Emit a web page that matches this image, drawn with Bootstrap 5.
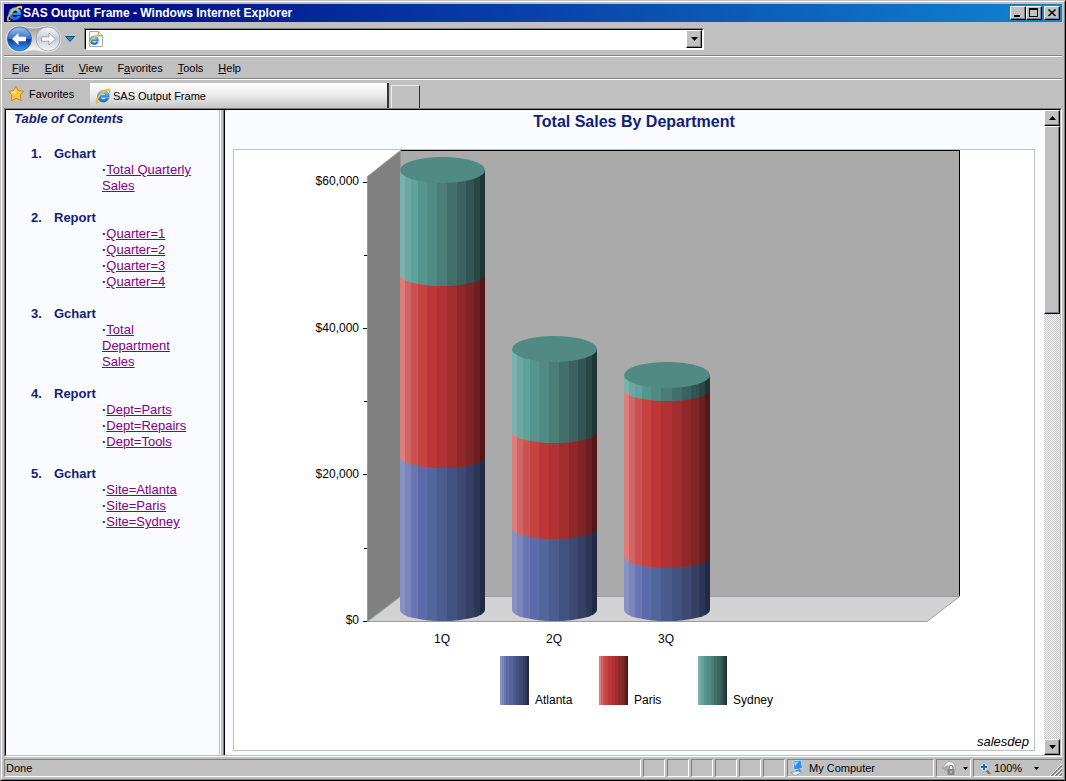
<!DOCTYPE html>
<html lang="en">
<head>
<meta charset="utf-8">
<meta name="viewport" content="width=device-width, initial-scale=1">
<title>SAS Output Frame</title>
<link href="https://cdn.jsdelivr.net/npm/bootstrap@5.3.0/dist/css/bootstrap.min.css" rel="stylesheet">
<style>
  :root { --face: #c0c0c0; --shade: #808080; --page: #fafbfe; --ink: #112277; }
  body { background: var(--face); color: #000; font: 11px/16px "Liberation Sans", Arial, sans-serif; }
  svg { display: block; flex: none; }
  .win { border: 1px solid; border-color: var(--face) #000 #000 var(--face); }
  .win-in { border: 1px solid; border-color: #fff var(--shade) var(--shade) #fff; padding: 2px; min-height: 0; }
  .title-bar { height: 18px; padding: 0 2px; background: linear-gradient(90deg, #000080, #1084d0); color: #fff; }
  .title-bar h1 { font-size: 12px; line-height: 18px; font-weight: 700; }
  .raised { background: var(--face); border: 1px solid; border-color: #fff #000 #000 #fff; box-shadow: inset -1px -1px var(--shade); padding: 0; border-radius: 0; color: #000; }
  .cap-btn { width: 16px; height: 14px; }
  .cap-close { margin-left: 2px; }
  .rule { border-bottom: 1px solid #fff; box-shadow: inset 0 -1px var(--shade); }
  .tools { height: 35px; }
  .round-btn { border: 0; background: none; padding: 0; }
  .address { flex: 0 1 620px; height: 22px; border: 1px solid; border-color: var(--shade) #fff #fff var(--shade); box-shadow: inset 1px 1px #000; background: #fff; padding: 1px 1px 1px 3px; }
  .address input { border: 0; outline: 0; background: transparent; min-width: 0; font-size: 11px; }
  .drop-btn { width: 16px; }
  .menus { height: 23px; padding: 3px 8px 0; gap: 15px; }
  .menus a { color: #000; text-decoration: none; }
  .tabs { height: 28px; }
  .fav-btn { width: 86px; border: 0; background: none; padding: 0 0 1px 4px; gap: 4px; }
  .page-tab { width: 299px; margin-top: 3px; padding: 0 5px; border: 0; border-right: 2px solid #333; background: linear-gradient(#fff, #e4e4e4 60%, #c4c4c4); gap: 2px; }
  .new-tab { width: 29px; margin: 5px 0 0 2px; border: 1px solid #eee; border-right-color: #333; border-bottom: 0; background: none; }
  .view { border: 1px solid; border-color: var(--shade) #fff #fff var(--shade); min-height: 0; }
  .view-in { border: 1px solid; border-color: #000 var(--face) var(--face) #000; min-height: 0; }
  .toc { width: 213px; background: var(--page); color: var(--ink); font-size: 13px; overflow: hidden; padding-top: 1px; }
  .toc h2 { font-size: 13px; line-height: 16px; font-weight: 700; font-style: italic; margin: 0 0 19px 8px; }
  .toc ol.entries { padding-left: 48px; font-weight: 700; }
  .toc ol.entries > li { margin-bottom: 16px; list-style: none; counter-increment: entry; }
  .toc ol.entries > li::before { content: counter(entry) "."; display: inline-block; width: 23px; margin-left: -23px; }
  .toc ul { font-weight: 400; width: 96px; margin-left: 48px; }
  .toc ul li::before { content: "·"; font-weight: 700; }
  .toc a { color: #800080; }
  .splitter { width: 6px; background: linear-gradient(90deg, var(--face) 1px, #fff 1px 2px, var(--face) 2px 4px, var(--shade) 4px 5px, #000 5px); }
  .output { background: var(--page); overflow: hidden; padding: 0 9px 0 8px; }
  .output h2 { font-size: 16px; line-height: 18px; font-weight: 700; color: var(--ink); margin: 3px 0 18px; }
  .graph { border: 1px solid #c0c0c0; background: #fff; }
  .graph svg { width: 100%; height: auto; }
  .graph text { font: 12px "Liberation Sans", Arial, sans-serif; }
  .graph .foot { font-size: 13px; font-style: italic; }
  .bar-v { width: 16px; background: repeating-conic-gradient(#fff 0 25%, var(--face) 0 50%) 0 0 / 2px 2px; }
  .bar-v button { height: 16px; }
  .thumb { height: 188px; }
  .status { height: 18px; gap: 2px; margin-top: 2px; }
  .cell { border: 1px solid; border-color: var(--shade) #fff #fff var(--shade); flex: none; width: 22px; }
  .cell.message { flex: 1 1 0; padding-left: 1px; }
  .cell.zone { width: 147px; padding-left: 2px; gap: 4px; }
  .cell.guard { width: 35px; padding: 0 0 0 4px; gap: 7px; background: none; }
  .cell.magnify { width: 89px; padding-left: 5px; border-right: 0; }
  .magnify button { gap: 3px; color: #000; }
  .magnify button svg:last-child { margin-left: 9px; }
</style>
</head>
<body>
<svg width="0" height="0" class="position-absolute" aria-hidden="true">
  <defs>
    <linearGradient id="eblue" x1="0" y1="0" x2="0" y2="1"><stop offset="0" stop-color="#8cdcff"/><stop offset=".5" stop-color="#2c9cf0"/><stop offset="1" stop-color="#1464cc"/></linearGradient>
    <symbol id="ie" viewBox="0 0 16 16">
      <path d="M8.300 2.400a5.900 5.900 0 0 1 5.900 6.900H5.700a2.700 2.700 0 0 0 5 1h3.200A5.900 5.900 0 1 1 8.300 2.400zM5.700 7.200h5.200a2.700 2.700 0 0 0-5.200 0z" fill="url(#eblue)" stroke="#1560b8" stroke-width=".4"/>
      <path d="M1.600 15.400C-.6 12.800 3.200 6.400 8.400 3 12 .4 15.300 0 15.300 2.200c0 .9-.5 1.900-1.100 2.900.3-1.900-.4-2.600-2-2.200C8.400 3.900 2.800 9.800 2.300 13c-.1 1.200.8 1.400 2.200.9-1 1-2.100 1.800-2.900 1.500z" fill="#fdc52e" stroke="#d88a10" stroke-width=".3"/>
    </symbol>
    <symbol id="down" viewBox="0 0 7 4"><path d="M0 0h7L3.500 4z"/></symbol>
  </defs>
</svg>
<div class="win vh-100 d-flex flex-column">
<div class="win-in flex-grow-1 d-flex flex-column">
  <header class="title-bar d-flex align-items-center">
    <svg width="17" height="17"><use href="#ie"/></svg>
    <h1 class="m-0 flex-grow-1 text-truncate">SAS Output Frame - Windows Internet Explorer</h1>
    <button class="raised cap-btn" aria-label="Minimize"><svg width="14" height="12"><path d="M3 8h6v2H3z"/></svg></button>
    <button class="raised cap-btn" aria-label="Maximize"><svg width="14" height="12"><path d="M2 1h9v9H2zM3 3v6h7V3z" fill-rule="evenodd"/></svg></button>
    <button class="raised cap-btn cap-close" aria-label="Close"><svg width="14" height="12"><path d="M3.500 2.500l7 6.500M10.500 2.500l-7 6.500" stroke="#000" stroke-width="1.600"/></svg></button>
  </header>

  <div class="tools rule d-flex align-items-center">
    <button class="round-btn" aria-label="Back and forward">
      <svg width="60" height="30" viewBox="4 24 60 30">
        <defs>
          <linearGradient id="bk" x1="0" y1="0" x2="0" y2="1"><stop offset="0" stop-color="#9cc0ee"/><stop offset=".48" stop-color="#3a70c8"/><stop offset=".52" stop-color="#0c3c9c"/><stop offset="1" stop-color="#3c9cf0"/></linearGradient>
          <linearGradient id="fw" x1="0" y1="0" x2="0" y2="1"><stop offset="0" stop-color="#f4f6f8"/><stop offset=".5" stop-color="#c8ced6"/><stop offset="1" stop-color="#f0f8fc"/></linearGradient>
          <linearGradient id="pod" x1="0" y1="0" x2="0" y2="1"><stop offset="0" stop-color="#999"/><stop offset=".5" stop-color="#ccc"/><stop offset="1" stop-color="#fff"/></linearGradient>
        </defs>
        <path d="M19 26c6 0 8 2 14.500 2S42 26 48 26a13 13 0 0 1 0 26c-6 0-8-2-14.500-2S25 52 19 52a13 13 0 0 1 0-26z" fill="url(#pod)" stroke="#e2e2e2"/>
        <circle cx="19.500" cy="39" r="12" fill="url(#bk)" stroke="#28579f" stroke-width=".7"/>
        <path d="M12 39l6.500-6v3.800h7.500v4.400h-7.500V45z" fill="#fff"/>
        <circle cx="48" cy="39" r="12" fill="url(#fw)" stroke="#8e959d" stroke-width=".7"/>
        <path d="M55.500 39L49 33v3.800h-7.500v4.400H49V45z" fill="#fff" stroke="#8a929e" stroke-width=".8"/>
      </svg>
    </button>
    <button class="round-btn me-2" aria-label="Recent pages"><svg width="12" height="8"><path d="M1.500 1.500h9L6 6.500z" fill="#2a8ad4" stroke="#134a80"/></svg></button>
    <div class="address d-flex align-items-center">
      <svg width="16" height="16" viewBox="0 0 16 16"><path d="M1.500.5h9l4 4v11h-13z" fill="#fff" stroke="#aaa"/><path d="M10.500.5v4h4" fill="#eee" stroke="#999"/><svg x="0" y="3" width="12" height="12"><use href="#ie"/></svg></svg>
      <input class="flex-grow-1" type="text" aria-label="Address">
      <button class="raised drop-btn h-100 d-flex align-items-center justify-content-center" aria-label="Show addresses"><svg width="7" height="4"><use href="#down"/></svg></button>
    </div>
  </div>

  <nav class="menus rule d-flex" aria-label="Menu bar">
    <a href="#"><u>F</u>ile</a><a href="#"><u>E</u>dit</a><a href="#"><u>V</u>iew</a><a href="#">F<u>a</u>vorites</a><a href="#"><u>T</u>ools</a><a href="#"><u>H</u>elp</a>
  </nav>

  <div class="tabs d-flex">
    <button class="fav-btn d-flex align-items-center">
      <svg width="17" height="17" viewBox="0 0 16 16"><path d="M7.500 1l2.200 4.300 5.300.6-3.700 3.600 1.100 5.200-4.700-2.300L3 15l.7-5.400L.5 6l4.900-.9z" fill="#ffc63a" stroke="#c87d10" stroke-width=".8"/><path d="M7.300 3L6 6.200l-3.500.5 4.500 2z" fill="#fff0a8"/></svg>
      Favorites
    </button>
    <button class="page-tab d-flex align-items-center"><svg width="16" height="16"><use href="#ie"/></svg>SAS Output Frame</button>
    <button class="new-tab" aria-label="New tab"></button>
  </div>

  <main class="view flex-grow-1 d-flex">
  <div class="view-in flex-grow-1 d-flex">
    <aside class="toc flex-shrink-0">
      <h2>Table of Contents</h2>
      <ol class="entries m-0">
        <li>Gchart<ul class="list-unstyled mb-0"><li><a href="#">Total Quarterly Sales</a></li></ul></li>
        <li>Report<ul class="list-unstyled mb-0"><li><a href="#">Quarter=1</a></li><li><a href="#">Quarter=2</a></li><li><a href="#">Quarter=3</a></li><li><a href="#">Quarter=4</a></li></ul></li>
        <li>Gchart<ul class="list-unstyled mb-0"><li><a href="#">Total Department Sales</a></li></ul></li>
        <li>Report<ul class="list-unstyled mb-0"><li><a href="#">Dept=Parts</a></li><li><a href="#">Dept=Repairs</a></li><li><a href="#">Dept=Tools</a></li></ul></li>
        <li>Gchart<ul class="list-unstyled mb-0"><li><a href="#">Site=Atlanta</a></li><li><a href="#">Site=Paris</a></li><li><a href="#">Site=Sydney</a></li></ul></li>
      </ol>
    </aside>
    <div class="splitter flex-shrink-0"></div>
    <section class="output flex-grow-1">
      <h2 class="text-center">Total Sales By Department</h2>
      <div class="graph">
        <svg viewBox="0 0 800 600" role="img" aria-label="Stacked cylinder chart of sales by quarter and site">
          <defs id="shades"></defs>
          <path d="M166 0h560v447H166z" fill="#aaa"/>
          <path d="M133.500 26.500L166.500.5V447L133.500 471.500z" fill="#808080" stroke="#999"/>
          <path d="M133.500 471.500L166.500 446.500H725.500L693 471.500z" fill="#d2d2d2" stroke="#9a9ea2"/>
          <path d="M167 .5H725.500V446" fill="none" stroke="#000"/>
          <path d="M129 32.500h4M129 178.500h4M129 324.500h4M129 471.500h4M130 105.500h3M130 251.500h3M130 398.500h3" stroke="#000"/>
          <g text-anchor="end"><text x="125" y="35">$60,000</text><text x="125" y="182">$40,000</text><text x="125" y="328">$20,000</text><text x="125" y="474">$0</text></g>
          <g id="columns"></g>
          <g text-anchor="middle"><text x="208" y="493">1Q</text><text x="320" y="493">2Q</text><text x="432" y="493">3Q</text></g>
          <path d="M266 506h29v49h-29z" fill="url(#atlanta)"/><text x="301" y="554">Atlanta</text>
          <path d="M365 506h29v49h-29z" fill="url(#paris)"/><text x="400" y="554">Paris</text>
          <path d="M464 506h29v49h-29z" fill="url(#sydney)"/><text x="499" y="554">Sydney</text>
          <text class="foot" x="795" y="596" text-anchor="end">salesdep</text>
        </svg>
      </div>
    </section>
    <div class="bar-v flex-shrink-0 d-flex flex-column">
      <button class="raised d-flex align-items-center justify-content-center" aria-label="Scroll up"><svg width="7" height="4"><path d="M0 4h7L3.500 0z"/></svg></button>
      <div class="raised thumb"></div>
      <button class="raised mt-auto d-flex align-items-center justify-content-center" aria-label="Scroll down"><svg width="7" height="4"><use href="#down"/></svg></button>
    </div>
  </div>
  </main>

  <footer class="status d-flex">
    <div class="cell message">Done</div>
    <div class="cell"></div><div class="cell"></div><div class="cell"></div><div class="cell"></div><div class="cell"></div><div class="cell"></div>
    <div class="cell zone d-flex align-items-center">
      <svg width="15" height="16" viewBox="0 0 15 16"><path d="M3 1l8-1 1.500 8.500L4 10z" fill="#2b8cf0" stroke="#c8dcec"/><path d="M4 2l5-.6-4 5z" fill="#9cd4ff"/><path d="M6 10l4-1 1 3-5 1z" fill="#6880a8"/><path d="M1 12.500l7-1.500 4 1.500-7 3z" fill="#e8eef4" stroke="#7890a8" stroke-width=".7"/></svg>
      My Computer
    </div>
    <button class="cell guard d-flex align-items-center" aria-label="Protected mode">
      <svg width="15" height="15" viewBox="0 0 15 15"><path d="M7 9L1 7l5-6c4-1.500 8 1 8 5v3z" fill="#eee" stroke="#999" stroke-width=".8"/><path d="M1 7l3 3 3-1V4z" fill="#a8a8a8"/><path d="M6.500 8h7v6h-7z" fill="#888"/><path d="M8 8V6.500a2 2 0 0 1 4 0V8" fill="none" stroke="#777" stroke-width="1.200"/><path d="M9.500 10h1v2h-1z" fill="#eee"/></svg>
      <svg width="5" height="3"><path d="M0 0h5L2.500 3z"/></svg>
    </button>
    <div class="cell magnify d-flex align-items-center">
      <button class="round-btn d-flex align-items-center flex-grow-1"><svg width="12" height="13" viewBox="0 0 12 13"><path d="M7 8l4 4" stroke="#a86a30" stroke-width="2.400"/><circle cx="5" cy="5" r="4.200" fill="#eaf6ff" stroke="#8ab4e0"/><path d="M5 2v6M2 5h6" stroke="#1068d0" stroke-width="2"/></svg>100%<svg width="5" height="3"><path d="M0 0h5L2.500 3z"/></svg></button>
      <svg width="13" height="13" class="align-self-end"><path d="M1 13L13 1M5 13l8-8M9 13l4-4" stroke="#fff"/><path d="M2 13L13 2M3 13L13 3M6 13l7-7M7 13l6-6M10 13l3-3M11 13l2-2" stroke="#808080"/></svg>
    </div>
  </footer>
</div>
</div>
<script src="https://cdn.jsdelivr.net/npm/bootstrap@5.3.0/dist/js/bootstrap.bundle.min.js"></script>
<script>
  // Facets of a cylinder: edge offsets as parts of its width, and one shade per facet.
  const edges = [0, 5, 11, 18, 27, 37, 47, 57, 66, 74, 80, 85];
  const shades = {
    atlanta: ['#8792c2', '#7a85b9', '#6877b2', '#5a6ba8', '#53669c', '#4a5b8f', '#435180', '#3d4972', '#343f62', '#2c3656', '#242945'],
    paris: ['#de7c7c', '#d26464', '#cc5252', '#c84242', '#c03538', '#b03235', '#a02d2f', '#8f2929', '#7f2525', '#6c2021', '#541718'],
    sydney: ['#7ab3ad', '#6ba8a2', '#5ea39b', '#56958d', '#508a82', '#497d76', '#426f6a', '#3a625e', '#325452', '#2a4745', '#203632']
  };
  document.getElementById('shades').innerHTML = Object.entries(shades).map(([id, list]) =>
    `<linearGradient id="${id}">` + list.map((c, i) =>
      `<stop offset="${edges[i] / 85}" stop-color="${c}"/><stop offset="${edges[i + 1] / 85}" stop-color="${c}"/>`).join('') +
    '</linearGradient>').join('');
  // Each column: left edge, width, then the levels from top to floor.
  const columns = [
    { x: 166, w: 85, y: [20, 125, 307, 460] },
    { x: 278, w: 85, y: [199, 282, 378, 460] },
    { x: 390, w: 86, y: [225, 240, 407, 460] }
  ];
  document.getElementById('columns').innerHTML = columns.map(({ x, w, y }) =>
    ['atlanta', 'paris', 'sydney'].map((site, i) =>
      `<path d="M${x} ${y[2 - i]}V${y[3 - i]}A${w / 2} 11 0 0 0 ${x + w} ${y[3 - i]}V${y[2 - i]}z" fill="url(#${site})"/>`).join('') +
    `<ellipse cx="${x + w / 2}" cy="${y[0]}" rx="${w / 2}" ry="13" fill="#508a82"/>`).join('');
</script>
</body>
</html>
